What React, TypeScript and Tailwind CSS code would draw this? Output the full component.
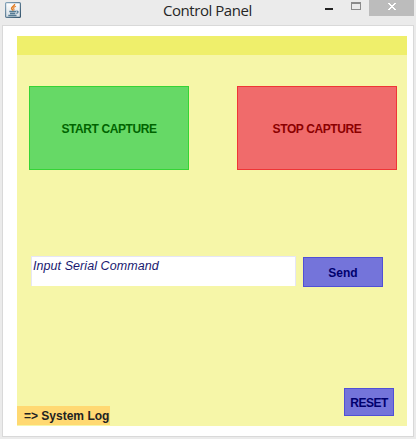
import React from "react";

function JavaIcon() {
  return (
    <svg width="16" height="16" viewBox="0 0 16 16" fill="none">
      <defs>
        <linearGradient id="frame" x1="0" y1="0" x2="1" y2="1">
          <stop offset="0" stopColor="#86a5bb" />
          <stop offset="1" stopColor="#34546c" />
        </linearGradient>
        <linearGradient id="face" x1="0" y1="0" x2="0" y2="1">
          <stop offset="0" stopColor="#ffffff" />
          <stop offset="1" stopColor="#d5dfe6" />
        </linearGradient>
      </defs>
      <rect x="0.600" y="0.600" width="14.800" height="14.800" rx="1" fill="url(#face)" stroke="url(#frame)" strokeWidth="1.200" />
      <path d="M9.6 2C10 4 6.400 4.600 6.600 6.400C6.700 7.300 7.800 7.600 7.900 8.600" stroke="#e07a20" strokeWidth="1.500" />
      <path d="M11 4.300C9 5 8 5.800 8.800 6.800C9.300 7.500 9 8 8.600 8.500" stroke="#e98a3a" strokeWidth="1.200" />
      <path d="M4.300 9.500H11M5 11.500H10.300M3.300 13.500H11.500" stroke="#557b94" strokeWidth="1.300" />
      <path d="M11.400 9.200C13.600 8.800 13.600 11 11.300 11.400" stroke="#557b94" strokeWidth="1.300" />
    </svg>
  );
}

export default function App() {
  return (
    <div className="flex h-[439px] w-[416px] flex-col overflow-hidden bg-[#ebebeb] font-['Liberation_Sans',Arial,sans-serif]">
      <header className="flex h-[25px] shrink-0 items-start">
        <div className="mt-[2px] ml-[5px] w-4">
          <JavaIcon />
        </div>
        <h1 className="ml-[142px] w-[92px] font-['Open_Sans','Noto_Sans',sans-serif] text-[15px] leading-[21px] font-normal tracking-[-0.45px] whitespace-nowrap text-[#262626]">
          Control Panel
        </h1>
        <div className="mt-2 ml-[70px] h-[2px] w-2 bg-[#222222]" />
        <div className="mt-[2px] ml-[18px] h-2 w-[10px] border border-t-2 border-[#8b8b8b]" />
        <button aria-label="Close" className="ml-2 flex h-4 w-[45px] justify-center bg-[#bcbcbc] pt-[3px]">
          <svg width="8" height="7" viewBox="0 0 8 7" shapeRendering="crispEdges" fill="#fff">
            <path d="M0 0H2V1H3V2H5V1H6V0H8V1H7V2H6V3H5V4H6V5H7V6H8V7H6V6H5V5H3V6H2V7H0V6H1V5H2V4H3V3H2V2H1V1H0Z" />
          </svg>
        </button>
      </header>
      <main className="ml-[2px] h-[412px] w-[412px] shrink-0 border border-[#d9d9d9] bg-white pt-[10px] pl-[14px]">
        <div className="flex h-[390px] w-[390px] flex-col bg-[#f6f6a8]">
          <div className="h-[19px] shrink-0 bg-[#efef6b]" />
          <div className="mt-[31px] ml-3 flex gap-12">
            <button className="h-[84px] w-[160px] border border-[#35d435] bg-[#66d966] pt-[2px] text-[12px] font-bold tracking-[-0.4px] text-[#006400]">
              START CAPTURE
            </button>
            <button className="h-[84px] w-[160px] border border-[#ef3535] bg-[#f06b6b] pt-[2px] text-[12px] font-bold tracking-[-0.4px] text-[#8b0000]">
              STOP CAPTURE
            </button>
          </div>
          <div className="mt-[86px] ml-[14px] flex items-start gap-[7px]">
            <div className="h-[30px] w-[265px] border border-b-0 border-[#e6e6f5] bg-white pt-[2px] pl-px text-[12.5px] leading-[15px] tracking-[0.07px] text-[#191970] italic">
              Input Serial Command
            </div>
            <button className="mt-px h-[30px] w-[80px] border border-[#5050d6] bg-[#7474da] pt-px text-[12px] font-bold text-[#00006e]">
              Send
            </button>
          </div>
          <div className="mt-auto flex items-end justify-between pr-[13px]">
            <div className="mb-px h-[19px] w-[93px] bg-[#ffd972] pt-px pl-[7px] text-[12px] leading-[19px] font-bold whitespace-nowrap text-[#222222]">
              =&gt; System Log
            </div>
            <button className="mb-[10px] h-7 w-[50px] border border-[#5050d6] bg-[#7474da] pt-px text-[12px] font-bold tracking-[-0.5px] text-[#00006e]">
              RESET
            </button>
          </div>
        </div>
      </main>
    </div>
  );
}
